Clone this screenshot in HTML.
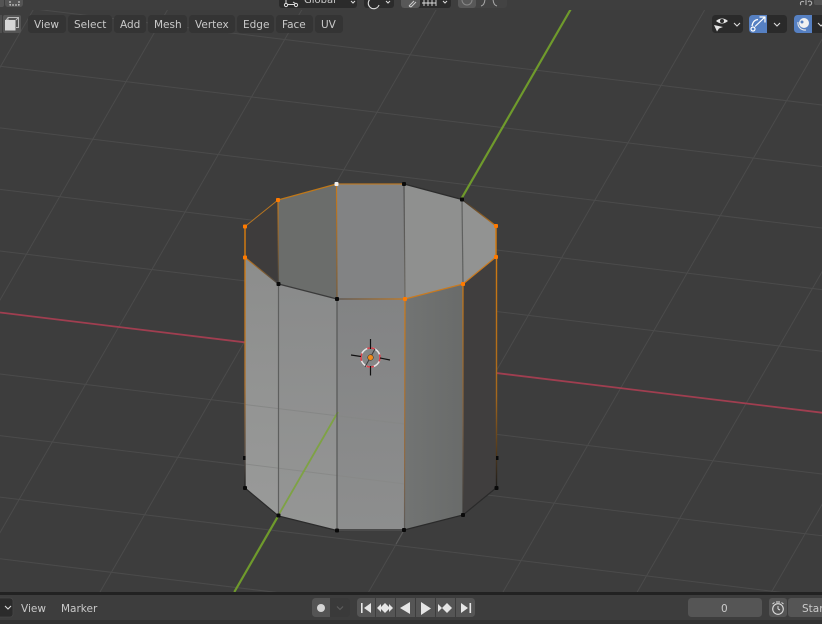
<!DOCTYPE html>
<html><head><meta charset="utf-8"><style>
html,body{margin:0;padding:0;background:#3d3d3d;width:822px;height:624px;overflow:hidden}
svg{display:block}
text{font-family:"DejaVu Sans","Liberation Sans",sans-serif;font-size:10.5px;fill:#cacaca}
</style></head><body>
<svg width="822" height="624" viewBox="0 0 822 624" xmlns="http://www.w3.org/2000/svg">
<defs>
<linearGradient id="od1" gradientUnits="userSpaceOnUse" x1="0" y1="258" x2="0" y2="488"><stop offset="0" stop-color="#d07a12"/><stop offset=".55" stop-color="#a87030"/><stop offset=".85" stop-color="#5a5048"/><stop offset="1" stop-color="#222"/></linearGradient>
<linearGradient id="od2" gradientUnits="userSpaceOnUse" x1="0" y1="299" x2="0" y2="530"><stop offset="0" stop-color="#d07a12"/><stop offset=".7" stop-color="#8f6a45"/><stop offset="1" stop-color="#5a5a5a"/></linearGradient>
<linearGradient id="od3" gradientUnits="userSpaceOnUse" x1="0" y1="284" x2="0" y2="515"><stop offset="0" stop-color="#d07a12"/><stop offset=".6" stop-color="#7a6045"/><stop offset="1" stop-color="#3a3a3a"/></linearGradient>
<linearGradient id="od4" gradientUnits="userSpaceOnUse" x1="0" y1="257" x2="0" y2="488"><stop offset="0" stop-color="#d07a12"/><stop offset=".6" stop-color="#a5681d"/><stop offset="1" stop-color="#1c1c1c"/></linearGradient>
<linearGradient id="v1" gradientUnits="userSpaceOnUse" x1="0" y1="200" x2="0" y2="284"><stop offset="0" stop-color="#c97a1a"/><stop offset="1" stop-color="#4a4a48"/></linearGradient>
<linearGradient id="v2" gradientUnits="userSpaceOnUse" x1="0" y1="184" x2="0" y2="299"><stop offset="0" stop-color="#c97a1a"/><stop offset="1" stop-color="#7a5c38"/></linearGradient>
<linearGradient id="v3" gradientUnits="userSpaceOnUse" x1="0" y1="184" x2="0" y2="299"><stop offset="0" stop-color="#505050"/><stop offset="1" stop-color="#6d6a64"/></linearGradient>
<linearGradient id="ij" gradientUnits="userSpaceOnUse" x1="405" y1="0" x2="337" y2="0"><stop offset="0" stop-color="#c97a1a"/><stop offset="1" stop-color="#5a5048"/></linearGradient>
<linearGradient id="kl" gradientUnits="userSpaceOnUse" x1="245" y1="0" x2="278" y2="0"><stop offset="0" stop-color="#c97a1a"/><stop offset="1" stop-color="#444"/></linearGradient>
<linearGradient id="ef" gradientUnits="userSpaceOnUse" x1="462" y1="0" x2="496" y2="0"><stop offset="0" stop-color="#333"/><stop offset="1" stop-color="#c97a1a"/></linearGradient>
<linearGradient id="f1" gradientUnits="userSpaceOnUse" x1="0" y1="258" x2="0" y2="516"><stop offset="0" stop-color="#8c8d8c"/><stop offset="1" stop-color="#999a99"/></linearGradient>
<linearGradient id="f2" gradientUnits="userSpaceOnUse" x1="0" y1="290" x2="0" y2="530"><stop offset="0" stop-color="#8a8b8b"/><stop offset="1" stop-color="#959695"/></linearGradient>
<linearGradient id="f3" gradientUnits="userSpaceOnUse" x1="0" y1="299" x2="0" y2="530"><stop offset="0" stop-color="#828384"/><stop offset="1" stop-color="#8d8e8e"/></linearGradient>
<linearGradient id="f4" gradientUnits="userSpaceOnUse" x1="405" y1="0" x2="463" y2="0"><stop offset="0" stop-color="#727473"/><stop offset="1" stop-color="#696b6a"/></linearGradient>
</defs>

<rect width="822" height="624" fill="#3d3d3d"/>

<!-- grid -->
<g stroke="#4b4b4b" stroke-width="1" fill="none">
<line x1="0" y1="4.8" x2="822" y2="105"/>
<line x1="0" y1="66.3" x2="822" y2="166.5"/>
<line x1="0" y1="127.9" x2="822" y2="228"/>
<line x1="0" y1="189.4" x2="822" y2="289.6"/>
<line x1="0" y1="251" x2="822" y2="351.2"/>
<line x1="0" y1="374" x2="822" y2="474"/>
<line x1="0" y1="435.6" x2="822" y2="535.8"/>
<line x1="0" y1="497.1" x2="822" y2="597.3"/>
<line x1="0" y1="558.7" x2="300" y2="595.3"/>
<line x1="38.9" y1="0" x2="-303" y2="592"/>
<line x1="173.2" y1="0" x2="-168.6" y2="592"/>
<line x1="307.5" y1="0" x2="-34.3" y2="592"/>
<line x1="441.8" y1="0" x2="100" y2="592"/>
<line x1="710.4" y1="0" x2="368.6" y2="592"/>
<line x1="844.7" y1="0" x2="503" y2="592"/>
<line x1="979" y1="0" x2="637.2" y2="592"/>
<line x1="1113.3" y1="0" x2="771.5" y2="592"/>
</g>
<!-- axes -->
<line x1="0" y1="312.5" x2="822" y2="412.7" stroke="#a03e50" stroke-width="1.8"/>
<line x1="576.1" y1="0" x2="234.3" y2="592" stroke="#6f9a2c" stroke-width="2.2"/>

<!-- back walls -->
<polygon points="278,200 336.5,184 337,299 278.5,284" fill="#6b6d6b"/>
<polygon points="336.5,184 404,184 405,299 337,299" fill="#828384"/>
<polygon points="404,184 462,199.5 463,284 405,299" fill="#8f908f"/>
<polygon points="462,199.5 496,226 496,257 463,284" fill="#929392"/>
<!-- open backface areas -->
<polygon points="245,226.5 278,200 278.5,284 245,257.5" fill="#3e3c3c"/>
<polygon points="463,284 496,257 496,488 463,515" fill="#403e3e"/>
<!-- front walls -->
<polygon points="245,257.5 278.5,284 278,516 245,488" fill="url(#f1)"/>
<polygon points="278.5,284 337,299 337,530.5 278,516" fill="url(#f2)"/>
<polygon points="337,299 405,299 404,530 337,530.5" fill="url(#f3)"/>
<polygon points="405,299 463,284 463,515 404,530" fill="url(#f4)"/>

<!-- see-through grid + axis on mesh -->
<line x1="245" y1="404.5" x2="405" y2="424" stroke="#868786" stroke-width="1"/>
<line x1="245" y1="464" x2="405" y2="484" stroke="#888988" stroke-width="1"/>
<line x1="338" y1="412" x2="278" y2="516" stroke="#7ea244" stroke-width="1.8"/>
<line x1="404" y1="530" x2="396" y2="544" stroke="#5a5a5a" stroke-width="1"/>

<!-- edges -->
<g fill="none" stroke-width="1.2">
<line x1="245" y1="226.5" x2="278" y2="200" stroke="#b87520" stroke-width="1"/>
<line x1="278" y1="200" x2="336.5" y2="184" stroke="#c07818"/>
<line x1="336.5" y1="184" x2="404" y2="184" stroke="#b87a2a"/>
<line x1="404" y1="184" x2="462" y2="199.5" stroke="#2c2c2c"/>
<line x1="462" y1="199.5" x2="496" y2="226" stroke="url(#ef)"/>
<line x1="496" y1="226" x2="496" y2="257" stroke="#d07a12" stroke-width="1.5"/>
<line x1="496" y1="257" x2="463" y2="284" stroke="#c87a20"/>
<line x1="463" y1="284" x2="405" y2="299" stroke="#c87a20"/>
<line x1="405" y1="299" x2="337" y2="299" stroke="url(#ij)"/>
<line x1="337" y1="299" x2="278.5" y2="284" stroke="#3a3a3a"/>
<line x1="278.5" y1="284" x2="245" y2="257.5" stroke="url(#kl)"/>
<line x1="245" y1="257.5" x2="245" y2="226.5" stroke="#d07a12" stroke-width="1.5"/>
<line x1="278" y1="200" x2="278.5" y2="284" stroke="url(#v1)"/>
<line x1="336.5" y1="184" x2="337" y2="299" stroke="url(#v2)"/>
<line x1="404" y1="184" x2="405" y2="299" stroke="url(#v3)"/>
<line x1="462" y1="199.5" x2="463" y2="284" stroke="#5f605f"/>
<line x1="245" y1="257.5" x2="245" y2="488" stroke="url(#od1)" stroke-width="1.4"/>
<line x1="278.5" y1="284" x2="278.5" y2="516" stroke="#5e5f5e"/>
<line x1="337" y1="299" x2="337" y2="530.5" stroke="#565756"/>
<line x1="405" y1="299" x2="404.5" y2="530" stroke="url(#od2)"/>
<line x1="463" y1="284" x2="463" y2="515" stroke="url(#od3)"/>
<line x1="496.5" y1="257" x2="496.5" y2="488" stroke="url(#od4)" stroke-width="1.4"/>
<polyline points="245,488 278.5,516 337,530.5 404,530 463,515 496,488" stroke="#2a2a2a"/>
<line x1="337" y1="530" x2="404" y2="530" stroke="#4a4a4a" stroke-width="2"/>
</g>

<!-- vertices -->
<g fill="#ff7a00">
<rect x="243" y="224.5" width="4" height="4" rx="1"/><rect x="276" y="198" width="4" height="4" rx="1"/>
<rect x="494" y="224" width="4" height="4" rx="1"/><rect x="494" y="255" width="4" height="4" rx="1"/>
<rect x="461" y="282" width="4" height="4" rx="1"/><rect x="403" y="297" width="4" height="4" rx="1"/>
<rect x="243" y="255.5" width="4" height="4" rx="1"/>
</g>
<g fill="#0a0a0a">
<rect x="402" y="182" width="4" height="4" rx="1"/><rect x="460" y="197.5" width="4" height="4" rx="1"/>
<rect x="335" y="297" width="4" height="4" rx="1"/><rect x="276.5" y="282" width="4" height="4" rx="1"/>
<rect x="243" y="486" width="4" height="4" rx="1"/><rect x="276.5" y="513.5" width="4" height="4" rx="1"/>
<rect x="335" y="528.5" width="4" height="4" rx="1"/><rect x="402" y="528" width="4" height="4" rx="1"/>
<rect x="461" y="513" width="4" height="4" rx="1"/><rect x="494.5" y="486" width="4" height="4" rx="1"/>
<rect x="243" y="456" width="2.5" height="4"/><rect x="496" y="456" width="2.5" height="4"/>
</g>
<rect x="334.5" y="182" width="4" height="4" rx="1" fill="#f0f0f0"/>

<!-- 3D cursor -->
<g fill="none">
<circle cx="370.5" cy="357.5" r="9.5" stroke="#e8e4e4" stroke-width="1.5"/>
<circle cx="370.5" cy="357.5" r="9.5" stroke="#d8404a" stroke-width="1.6" stroke-dasharray="7.5 7.4" stroke-dashoffset="3.5"/>
<line x1="351" y1="355" x2="361" y2="356.5" stroke="#111" stroke-width="1.2"/>
<line x1="380" y1="358" x2="390" y2="360" stroke="#111" stroke-width="1.2"/>
<line x1="370.5" y1="339" x2="370.5" y2="349" stroke="#111" stroke-width="1.2"/>
<line x1="370.5" y1="366" x2="370.5" y2="375.5" stroke="#111" stroke-width="1.2"/>
<line x1="365" y1="367" x2="375" y2="349" stroke="#3c3c3c" stroke-width="1"/>
</g>
<circle cx="370.5" cy="357.5" r="2.8" fill="#f08a1c" stroke="#3a2a10" stroke-width=".5"/>

<!-- top strip -->
<rect x="0" y="0" width="822" height="10" fill="#3e3e3e"/>
<rect x="-4" y="-6" width="8" height="13" rx="2" fill="#545454"/>
<rect x="5" y="-6" width="18" height="13" rx="3" fill="#545454"/>
<rect x="10" y="-2" width="9" height="7" fill="none" stroke="#ddd" stroke-width="1" stroke-dasharray="2 1"/>
<rect x="279" y="-8" width="78" height="16" rx="3" fill="#2b2b2b"/>
<path d="M286 -1V4.500H297M293 2L297 4.500" stroke="#ddd" fill="none" stroke-width="1"/>
<circle cx="286" cy="5" r="1.600" fill="#2b2b2b" stroke="#ddd"/><circle cx="296" cy="5" r="1.600" fill="#2b2b2b" stroke="#ddd"/>
<text x="304" y="3" fill="#d8d8d8" style="font-size:10px">Global</text>
<path d="M351 1l2 2 2-2" stroke="#ddd" fill="none"/>
<rect x="364" y="-8" width="30" height="16" rx="3" fill="#2b2b2b"/>
<path d="M372 -2a5.500 5.500 0 1 0 7 7" stroke="#ddd" fill="none" stroke-width="1.100"/>
<path d="M386 1l2 2 2-2" stroke="#ddd" fill="none"/>
<rect x="401" y="-8" width="50" height="16" rx="3" fill="#2b2b2b"/>
<rect x="401" y="-8" width="19" height="16" rx="3" fill="#585858"/>
<path d="M409 6l5-5M411 7l5-5M409 6l2 1" stroke="#ccc" fill="none"/>
<path d="M422 3H436M424 0V6M428 0V6M432 0V6M436 0V6" stroke="#ddd" fill="none" stroke-width=".9"/>
<path d="M443 1l2 2 2-2" stroke="#ddd" fill="none"/>
<rect x="458" y="-8" width="49" height="16" rx="3" fill="#434343"/>
<rect x="458" y="-8" width="18" height="16" rx="3" fill="#585858"/>
<circle cx="467" cy="0" r="5" fill="none" stroke="#888"/>
<path d="M481 6q4-1 4-8M497 6q-4-1-4-8" stroke="#aaa" fill="none"/>
<g stroke="#bbb" fill="none"><path d="M801 5a2 2 0 1 1 3-3M808 2a2 2 0 1 1 1 3"/><line x1="806" y1="0" x2="806" y2="5"/></g>
<rect x="814" y="-6" width="10" height="11" rx="2" fill="#545454"/>

<!-- mode icon -->
<rect x="-3" y="15" width="5" height="18" fill="#4e4e4e"/>
<rect x="3" y="15" width="18" height="18" rx="2" fill="#555"/>
<path d="M8 20V17.500H18.500V27.500H16" fill="none" stroke="#bbb" stroke-width="1"/>
<path d="M6 20L8.500 17.500M16 20L18.500 17.500" stroke="#bbb" stroke-width="1"/>
<rect x="5" y="20" width="10.500" height="10.500" fill="#d6d6d6"/>

<!-- menu pills -->
<g fill="#343434">
<rect x="28" y="15" width="38" height="18" rx="3.500"/>
<rect x="68" y="15" width="44" height="18" rx="3.500"/>
<rect x="114" y="15" width="32" height="18" rx="3.500"/>
<rect x="148" y="15" width="39" height="18" rx="3.500"/>
<rect x="189" y="15" width="46" height="18" rx="3.500"/>
<rect x="237" y="15" width="37" height="18" rx="3.500"/>
<rect x="276" y="15" width="37" height="18" rx="3.500"/>
<rect x="315" y="15" width="28" height="18" rx="3.500"/>
</g>
<text x="34" y="28">View</text>
<text x="74" y="28">Select</text>
<text x="120" y="28">Add</text>
<text x="154" y="28">Mesh</text>
<text x="195" y="28">Vertex</text>
<text x="243" y="28">Edge</text>
<text x="282" y="28">Face</text>
<text x="321" y="28">UV</text>

<!-- right header -->
<rect x="712" y="15" width="31" height="18" rx="3.500" fill="#2a2a2a"/>
<path d="M716 21q6-5 12 0q-6 5-12 0z" fill="#e4e4e4"/><circle cx="722" cy="21" r="2" fill="#2a2a2a"/>
<path d="M714 25l9 2-4 1.500-2 3z" fill="#e4e4e4"/>
<path d="M734 23l3 3 3-3" stroke="#ddd" fill="none" stroke-width="1.100"/>
<rect x="749" y="15" width="38" height="18" rx="3.500" fill="#2a2a2a"/>
<path d="M749 18.500a3.500 3.500 0 0 1 3.500-3.500H767V33H752.500a3.500 3.500 0 0 1-3.500-3.500z" fill="#5680c2"/>
<circle cx="753" cy="29" r="2" fill="none" stroke="#fff" stroke-width="1.200"/>
<path d="M752 26q1-6 6-6.500" stroke="#fff" fill="none" stroke-width="1.200"/>
<path d="M755 26.500L765 17M759.500 17H765V22.500" stroke="#fff" fill="none" stroke-width="1.200"/>
<path d="M774 23l3 3 3-3" stroke="#ddd" fill="none" stroke-width="1.100"/>
<rect x="794" y="15" width="40" height="18" rx="3.500" fill="#2a2a2a"/>
<path d="M794 18.500a3.500 3.500 0 0 1 3.500-3.500H812V33H797.500a3.500 3.500 0 0 1-3.500-3.500z" fill="#5680c2"/>
<circle cx="804" cy="23" r="5" fill="#f0f0f0"/>
<path d="M798 22a7 7 0 0 0 8 8" stroke="#e8e8e8" fill="none" stroke-width="1.100"/>
<circle cx="802" cy="22" r="1.500" fill="#5680c2"/>
<path d="M818 23l3 3 3-3" stroke="#ddd" fill="none" stroke-width="1.100"/>

<!-- bottom bar -->
<rect x="0" y="592" width="822" height="3" fill="#222222"/>
<rect x="0" y="595" width="822" height="25" fill="#3d3d3d"/>
<rect x="0" y="620" width="822" height="4" fill="#323232"/>
<rect x="-6" y="598" width="19" height="19" rx="3" fill="#2b2b2b" stroke="#464646" stroke-width=".8"/>
<path d="M5 606l3 3 3-3" stroke="#ddd" fill="none" stroke-width="1.100"/>
<text x="21" y="612">View</text>
<text x="61" y="612">Marker</text>

<rect x="312" y="598" width="38" height="19" rx="3.500" fill="#3a3a3a"/>
<path d="M330 598H315.500a3.500 3.500 0 0 0-3.500 3.500v12a3.500 3.500 0 0 0 3.500 3.500H330z" fill="#545454"/>
<circle cx="321" cy="608" r="4" fill="#d4d4d4"/>
<path d="M337 606.500l3 3 3-3" stroke="#5e5e5e" fill="none" stroke-width="1.100"/>

<rect x="357" y="598" width="118" height="19" rx="3.500" fill="#555"/>
<g fill="#3d3d3d">
<rect x="375" y="598" width="1" height="19"/><rect x="395" y="598" width="1" height="19"/>
<rect x="415" y="598" width="1" height="19"/><rect x="435" y="598" width="1" height="19"/>
<rect x="455" y="598" width="1" height="19"/>
</g>
<g fill="#e6e6e6">
<rect x="361" y="603" width="1.600" height="10"/><path d="M371 603v10l-7-5z"/>
<path d="M385 603l-5 5 5 5 5-5z"/><path d="M381 604v8l-4-4z"/><path d="M389 604v8l4-4z"/>
<path d="M410 602v12l-10-6z"/>
<path d="M421 602v13l10-6.500z"/>
<path d="M438 604v8l4-4z"/><path d="M447 603l-5 5 5 5 5-5z"/>
<path d="M461 603v10l7-5z"/><rect x="469.500" y="603" width="1.600" height="10"/>
</g>

<rect x="688" y="598" width="74" height="19" rx="3.500" fill="#555"/>
<text x="721" y="612" fill="#dcdcdc">0</text>
<rect x="769" y="598" width="18" height="19" rx="3" fill="#555"/>
<circle cx="778" cy="609" r="5.300" fill="none" stroke="#ddd" stroke-width="1.100"/>
<path d="M776 602h4M778 609v-3M772.500 604l2-1.500M783.500 604l-2-1.500M778 609l2 1" stroke="#ddd" fill="none" stroke-width="1"/>
<rect x="788" y="598" width="40" height="19" rx="3" fill="#555"/>
<text x="802" y="612" fill="#dcdcdc">Start</text>
</svg>
</body></html>
